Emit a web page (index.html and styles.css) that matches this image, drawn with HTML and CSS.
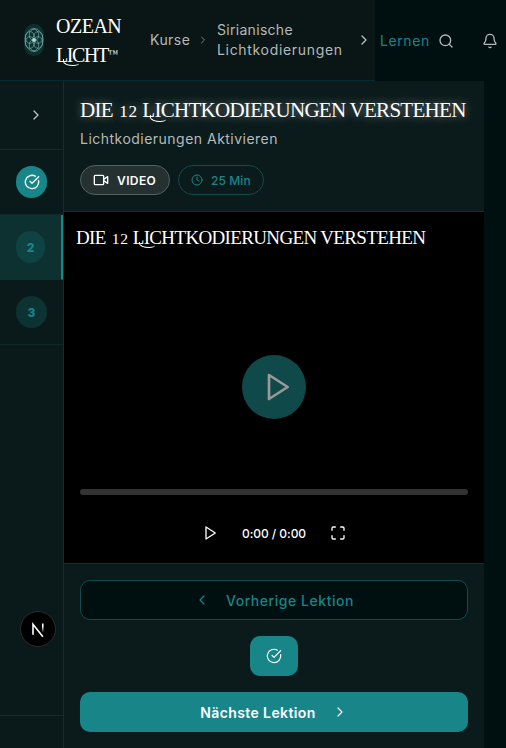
FILE: index.html
```html
<!DOCTYPE html>
<html lang="de">
<head>
<meta charset="utf-8">
<title>Ozean Licht</title>
<link rel="stylesheet" href="styles.css">
</head>
<body>
<svg class="sprite" aria-hidden="true">
  <symbol id="right" viewBox="0 0 24 24"><path d="m9 18 6-6-6-6"/></symbol>
  <symbol id="left" viewBox="0 0 24 24"><path d="m15 18-6-6 6-6"/></symbol>
  <symbol id="check" viewBox="0 0 24 24"><path d="M21.8 10A10 10 0 1 1 17 3.3"/><path d="m9 11 3 3L22 4"/></symbol>
  <symbol id="play" viewBox="0 0 24 24"><path d="m6 3 14 9-14 9z"/></symbol>
</svg>
<header class="topbar">
  <div class="topbar-main">
    <svg class="logo" viewBox="0 0 20 32">
      <rect width="20" height="32" rx="10"/>
      <g>
        <ellipse cx="10" cy="16" rx="9" ry="11.5"/>
        <ellipse cx="10" cy="11" rx="4.7" ry="5.8"/><ellipse cx="10" cy="21" rx="4.7" ry="5.8"/>
        <ellipse cx="6" cy="13.5" rx="4.7" ry="5.8"/><ellipse cx="14" cy="13.5" rx="4.7" ry="5.8"/>
        <ellipse cx="6" cy="18.5" rx="4.7" ry="5.8"/><ellipse cx="14" cy="18.5" rx="4.7" ry="5.8"/>
      </g>
      <circle cx="10" cy="16" r="2"/>
    </svg>
    <div class="brand"><span class="brand-a">Ozean</span><br><span class="brand-b"><span class="swash">L</span>icht<span class="tm">™</span></span></div>
    <span class="crumb kurse">Kurse</span>
    <svg class="icon sep"><use href="#right"/></svg>
    <span class="crumb course">Sirianische<br><span class="course-b">Lichtkodierungen</span></span>
    <svg class="icon next"><use href="#right"/></svg>
  </div>
  <span class="crumb learn">Lernen</span>
  <svg class="icon search" viewBox="0 0 24 24"><circle cx="11" cy="11" r="8"/><path d="m21 21-4.3-4.3"/></svg>
  <svg class="icon bell" viewBox="0 0 24 24"><path d="M10.3 21a2 2 0 0 0 3.4 0M3.3 15.3A1 1 0 0 0 4 17h16a1 1 0 0 0 .7-1.7C19.4 14 18 12.5 18 8A6 6 0 0 0 6 8c0 4.5-1.4 6-2.7 7.3"/></svg>
</header>
<div class="page">
  <nav class="rail">
    <div class="rail-toggle"><svg class="icon"><use href="#right"/></svg></div>
    <div class="step"><span class="dot done"><svg class="icon"><use href="#check"/></svg></span></div>
    <div class="step active"><span class="dot small">2</span></div>
    <div class="step"><span class="dot">3</span></div>
    <div class="rail-end"></div>
    <span class="dev"><svg viewBox="0 0 36 36"><defs><linearGradient id="fade" x1="0" y1="0" x2="0" y2="1"><stop offset=".3" stop-color="#fff"/><stop offset="1" stop-color="#fff" stop-opacity="0"/></linearGradient></defs><path d="M12.7 24V13l10.5 13.2"/><path class="bar" d="M22.2 12.2h1.7v10h-1.7z"/></svg></span>
  </nav>
  <main class="lesson">
    <section class="intro">
      <h1 class="title">Die <span class="num">12</span> <span class="swash">L</span>ichtkodierungen verstehen</h1>
      <p class="subtitle">Lichtkodierungen Aktivieren</p>
      <div class="tags">
        <span class="tag video"><svg class="icon" viewBox="0 0 24 24"><rect x="2" y="5" width="14" height="14" rx="1.5"/><path d="m16 11 6-4v10l-6-4"/></svg><span>VIDEO</span></span>
        <span class="tag time"><svg class="icon" viewBox="0 0 24 24"><circle cx="12" cy="12" r="10"/><path d="M12 6v6l4 2"/></svg><span>25 Min</span></span>
      </div>
    </section>
    <section class="player">
      <h2 class="player-title">Die <span class="num">12</span> <span class="swash">L</span>ichtkodierungen verstehen</h2>
      <div class="stage"><span class="big-play"><svg class="icon"><use href="#play"/></svg></span></div>
      <div class="progress"></div>
      <div class="controls">
        <svg class="icon"><use href="#play"/></svg>
        <span class="clock">0:00 / 0:00</span>
        <svg class="icon" viewBox="0 0 24 24"><path d="M8 3H5a2 2 0 0 0-2 2v3M16 3h3a2 2 0 0 1 2 2v3M8 21H5a2 2 0 0 1-2-2v-3M16 21h3a2 2 0 0 0 2-2v-3"/></svg>
      </div>
    </section>
    <footer class="actions">
      <div class="button prev"><svg class="icon"><use href="#left"/></svg><span>Vorherige Lektion</span></div>
      <div class="button complete"><svg class="icon"><use href="#check"/></svg></div>
      <div class="button forward"><span>Nächste Lektion</span><svg class="icon"><use href="#right"/></svg></div>
    </footer>
  </main>
</div>
</body>
</html>
```
FILE: styles.css
```css
* { box-sizing: border-box; }
body { margin: 0; width: 506px; height: 748px; overflow: hidden; background: #000f0f; color: #fff; font-family: Inter, "Open Sans", sans-serif; }
.sprite { position: absolute; width: 0; height: 0; }
.icon { display: block; flex: none; width: 16px; height: 16px; fill: none; stroke: currentColor; stroke-width: 2; stroke-linecap: round; stroke-linejoin: round; }

.topbar { display: flex; align-items: center; height: 81px; color: #b5b9b9; }
.topbar-main { display: flex; align-items: center; width: 375px; height: 81px; padding-left: 24px; background: #091615; border-bottom: 1px solid #0b2930; }
.logo { width: 20px; height: 32px; fill: #0c3030; flex: none; }
.logo g { fill: none; stroke: #75aaa9; stroke-width: .7; }
.logo circle { fill: #a5d7d2; }
.brand { width: 67px; flex: none; margin-left: 12px; color: #fff; font: 20px/28px "Liberation Serif", serif; text-transform: uppercase; white-space: nowrap; }
.brand-a { letter-spacing: -.5px; }
.brand-b { letter-spacing: -1.4px; }
.tm { font-size: 10px; vertical-align: 5px; }
.crumb { flex: none; font-size: 14px; line-height: 20px; white-space: nowrap; }
.kurse { width: 40px; margin-left: 27px; letter-spacing: .45px; }
.sep { width: 12px; height: 12px; margin-left: 7px; opacity: .65; }
.course { width: 130px; margin-left: 8px; letter-spacing: .3px; }
.course-b { letter-spacing: .68px; }
.next { margin-left: 9px; }
.learn { width: 50px; margin-left: 5px; color: #188689; letter-spacing: .6px; }
.search { margin-left: 8px; }
.bell { margin-left: 28px; }

.page { display: flex; height: 667px; }
.rail { position: relative; display: flex; flex-direction: column; width: 64px; background: #0a1a1a; border-right: 1px solid #0e3030; }
.rail-toggle { display: flex; align-items: center; height: 69px; padding-left: 28px; color: #b8bdbd; border-bottom: 1px solid #0e3030; }
.step { display: flex; align-items: center; height: 65px; padding-left: 16px; border-bottom: 1px solid #0d2929; }
.active { background: #0d3030; border-right: 2px solid #188689; border-bottom-color: #0d3030; }
.dot { display: flex; align-items: center; justify-content: center; width: 31px; height: 32px; border-radius: 16px; background: #0d3232; color: #188689; font-size: 12px; font-weight: 800; }
.small { width: 29px; background: #0f4243; }
.done { background: #188689; color: #fff; }
.rail-end { height: 33px; margin-top: auto; border-top: 1px solid #0e3030; }
.dev { position: absolute; left: 20px; top: 530px; width: 36px; height: 36px; border-radius: 50%; background: #000; border: 1px solid #2c2c2c; }
.dev svg { display: block; width: 34px; height: 34px; fill: none; stroke: #fff; stroke-width: 1.7; }
.dev .bar { fill: url(#fade); stroke: none; }

.lesson { display: flex; flex-direction: column; width: 420px; background: #0b1a1a; }
.intro { height: 131px; padding: 16px 16px 0; border-bottom: 1px solid #0e3030; }
.title, .player-title { margin: 0; font-family: "Liberation Serif", serif; font-weight: 400; text-transform: uppercase; white-space: nowrap; }
.title { height: 28px; font-size: 21px; line-height: 27px; letter-spacing: -.72px; text-shadow: 0 0 8px rgba(255,255,255,.5); }
.num { font-size: .82em; letter-spacing: .6px; }
.title .num { margin-left: 2px; }
.player-title .num { margin-left: 2px; }
.swash { position: relative; }
.swash::after { content: ""; position: absolute; left: .35em; bottom: -.02em; width: .75em; height: .3em; border-bottom: 1.5px solid currentColor; border-left: 1px solid currentColor; border-radius: 0 0 50% 90%; }
.subtitle { height: 20px; margin: 4px 0 0; color: #b5baba; font-size: 14px; line-height: 20px; letter-spacing: .48px; white-space: nowrap; }
.tags { display: flex; gap: 8px; margin-top: 16px; }
.tag { display: flex; align-items: center; height: 30px; padding-left: 12px; gap: 8px; border: 1px solid; border-radius: 15px; font-size: 12px; font-weight: 600; white-space: nowrap; }
.video { width: 90px; background: #253130; border-color: #526060; letter-spacing: .4px; }
.time { width: 86px; color: #188689; border-color: #0f4c4e; font-weight: 500; letter-spacing: .1px; }
.time .icon { width: 12px; height: 12px; }

.player { height: 351px; background: #000; }
.player-title { height: 52px; padding: 13px 0 0 12px; font-size: 19px; line-height: 26px; letter-spacing: -.65px; }
.stage { display: flex; align-items: center; justify-content: center; height: 247px; }
.big-play { display: flex; align-items: center; justify-content: center; width: 64px; height: 64px; margin-top: -1px; padding-left: 5px; border-radius: 50%; background: #0f494a; color: #999; }
.big-play .icon { width: 32px; height: 32px; }
.progress { height: 6px; margin: -22px 16px 0; border-radius: 3px; background: #333; }
.controls { display: flex; align-items: center; justify-content: center; gap: 24px; height: 20px; margin-top: 28px; }
.clock { width: 64px; font-size: 12px; font-weight: 500; letter-spacing: -.05px; white-space: nowrap; }

.actions { display: flex; flex-direction: column; align-items: center; gap: 16px; flex: 1; padding: 16px 16px 0; border-top: 1px solid #0e3030; }
.button { display: flex; align-items: center; justify-content: center; gap: 16px; width: 100%; height: 40px; flex: none; border-radius: 10px; background: #188689; font-size: 14px; font-weight: 600; white-space: nowrap; }
.button .icon { stroke-width: 1.8; }
.prev { color: #188689; background: #000f0f; border: 1px solid #0f4c4e; font-weight: 500; letter-spacing: .55px; }
.forward { letter-spacing: .38px; }
.complete { width: 48px; }
```
